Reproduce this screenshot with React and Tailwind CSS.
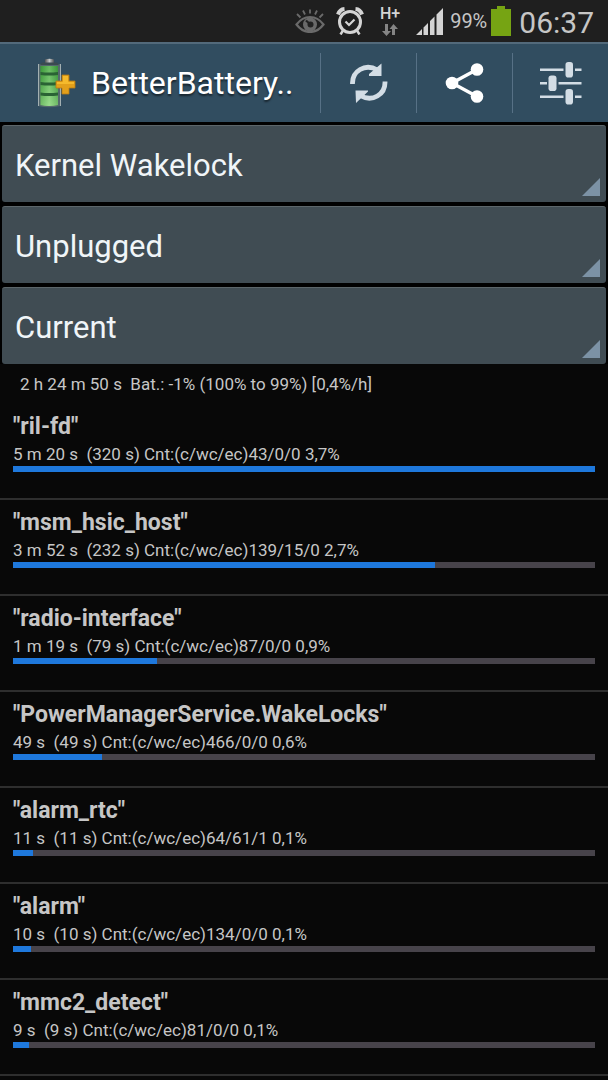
import React from "react";

const wakelocks = [
  { name: '"ril-fd"', seconds: 320, detail: "5 m 20 s  (320 s) Cnt:(c/wc/ec)43/0/0 3,7%" },
  { name: '"msm_hsic_host"', seconds: 232, detail: "3 m 52 s  (232 s) Cnt:(c/wc/ec)139/15/0 2,7%" },
  { name: '"radio-interface"', seconds: 79, detail: "1 m 19 s  (79 s) Cnt:(c/wc/ec)87/0/0 0,9%" },
  { name: '"PowerManagerService.WakeLocks"', seconds: 49, detail: "49 s  (49 s) Cnt:(c/wc/ec)466/0/0 0,6%" },
  { name: '"alarm_rtc"', seconds: 11, detail: "11 s  (11 s) Cnt:(c/wc/ec)64/61/1 0,1%" },
  { name: '"alarm"', seconds: 10, detail: "10 s  (10 s) Cnt:(c/wc/ec)134/0/0 0,1%" },
  { name: '"mmc2_detect"', seconds: 9, detail: "9 s  (9 s) Cnt:(c/wc/ec)81/0/0 0,1%" },
];
const longest = Math.max(...wakelocks.map((w) => w.seconds));

function EyeIcon() {
  return (
    <svg className="h-6 w-8" viewBox="0 0 32 24" fill="none" aria-hidden="true">
      <path d="M2.500 15.500C7 9.500 11.500 8 16 8S25 9.500 29.500 15.500C25 21.500 21 23 16 23S7 21.500 2.500 15.500Z" stroke="#6a6a6a" strokeWidth="2.200" />
      <circle cx="16" cy="15.500" r="7" fill="#6a6a6a" />
      <circle cx="16.500" cy="15.500" r="3" fill="#222" />
      <path d="M16.500 15.500L12 11.500" stroke="#222" strokeWidth="2.200" />
      <path d="M16 .5V4.500M9 1.500L11 5.500M23 1.500L21 5.500M3 5L6.500 8.500M29 5L25.500 8.500" stroke="#6a6a6a" strokeWidth="1.800" />
    </svg>
  );
}

function AlarmIcon() {
  return (
    <svg className="h-7 w-7" viewBox="0 0 28 28" fill="none" stroke="#d4d4d4" aria-hidden="true">
      <circle cx="14" cy="15" r="10.500" strokeWidth="3" />
      <path d="M9.500 14.500L13 18L18.500 12.500" strokeWidth="2.200" />
      <path d="M2 7.500C3 4.500 5.500 2.200 8.500 2M26 7.500C25 4.500 22.500 2.200 19.500 2" strokeWidth="4" />
      <path d="M7 23.500L4.500 27.500M21 23.500L23.500 27.500" strokeWidth="2.500" />
    </svg>
  );
}

function DataArrowsIcon() {
  return (
    <svg className="h-3 w-4" viewBox="0 0 16 12" fill="#858585" aria-hidden="true">
      <path d="M3 0H6V7H9L4.500 12L0 7H3ZM10 11H13V5H16L11.500 0L7.500 5H10Z" />
    </svg>
  );
}

function SignalIcon() {
  return (
    <svg className="h-7 w-7" viewBox="0 0 28 28" fill="#d4d4d4" aria-hidden="true">
      <path d="M0 28L6 22V28ZM7.500 20.500L12 16V28H7.500ZM14 14L18.500 9.500V28H14ZM20.500 7.500L27 1V28H20.500Z" />
    </svg>
  );
}

function StatusBatteryIcon() {
  return (
    <svg className="h-[30px] w-5" viewBox="0 0 20 30" fill="#76a413" aria-hidden="true">
      <path d="M6 0H14V3H20V30H0V3H6Z" />
    </svg>
  );
}

function AppLogo() {
  return (
    <svg className="h-[52px] w-10 shrink-0" viewBox="0 0 40 52" aria-hidden="true">
      <defs>
        <linearGradient id="cell" x1="0" x2="1">
          <stop offset="0" stopColor="#3f9e3a" />
          <stop offset=".5" stopColor="#8fdc80" />
          <stop offset="1" stopColor="#3f9a3c" />
        </linearGradient>
        <linearGradient id="shade" x1="0" x2="0" y1="0" y2="1">
          <stop offset="0" stopColor="#2f8a35" stopOpacity=".4" />
          <stop offset="1" stopColor="#a6dd98" stopOpacity=".5" />
        </linearGradient>
        <linearGradient id="cap" x1="0" x2="1">
          <stop offset="0" stopColor="#555" />
          <stop offset=".5" stopColor="#c5c9cb" />
          <stop offset="1" stopColor="#505354" />
        </linearGradient>
      </defs>
      <path d="M1 7H23V49Q12 51.500 1 49Z" fill="#55686d" />
      <path d="M8 2.500Q12.500 1 17 2.500V6H8Z" fill="url(#cap)" />
      <path d="M5 5.500H20L22 8H3Z" fill="#3b4a50" />
      <path d="M1.500 7V49M23.500 7V49" stroke="#a3b0b2" />
      <path d="M3.500 9H21V48Q12 50 3.500 48Z" fill="url(#cell)" />
      <path d="M3.500 9H21V48Q12 50 3.500 48Z" fill="url(#shade)" />
      <path d="M3.500 15Q12 16 21 15V18Q12 19 3.500 18ZM3.500 25Q12 26 21 25V28Q12 29 3.500 28ZM3.500 35.500Q12 36.500 21 35.500V38.500Q12 39.500 3.500 38.500Z" fill="#2a6334" />
      <path d="M25 18H32V24H38V31H32V37H25V31H19V24H25Z" fill="#e3a01b" stroke="#b97b12" strokeWidth=".8" />
      <path d="M26 19H31V25H37V27H20V25H26Z" fill="#f5ba2c" />
    </svg>
  );
}

function RefreshIcon() {
  return (
    <svg className="h-10 w-10" viewBox="0 0 40 40" aria-hidden="true">
      <g fill="none" stroke="#d3dde5" strokeWidth="4.800">
        <path d="M3.500 21C3 8 16 0 28.500 7" />
        <path d="M36 18.500C36.500 31.500 23.500 39.500 11 32.500" />
      </g>
      <path d="M20 11L32.500 .5V13H20ZM19 28.500L7 40L6.500 27.500H19Z" fill="#d3dde5" />
    </svg>
  );
}

function ShareIcon() {
  return (
    <svg className="h-10 w-10" viewBox="0 0 40 40" aria-hidden="true">
      <path d="M32 6.500L7 20L32 33.500" fill="none" stroke="#fff" strokeWidth="3.400" />
      <g fill="#fff">
        <circle cx="32" cy="6.500" r="6.300" />
        <circle cx="7" cy="20" r="6.300" />
        <circle cx="32" cy="33.500" r="6.300" />
      </g>
    </svg>
  );
}

function SlidersIcon() {
  return (
    <svg className="h-11 w-11" viewBox="0 0 44 44" fill="#d3dde5" aria-hidden="true">
      <path d="M1 7.500H24.500V10H1ZM36 7.500H42.500V10H36ZM1 21H8V23.500H1ZM19.500 21H42.500V23.500H19.500ZM1 34.500H24.500V37H1ZM36 34.500H42.500V37H36Z" />
      <rect x="26.500" y="1" width="7.500" height="15.500" rx="2.800" />
      <rect x="9.500" y="14.500" width="8" height="15.500" rx="2.800" />
      <rect x="26.500" y="28" width="7.500" height="15.500" rx="2.800" />
    </svg>
  );
}

function Action({ label, children }) {
  return (
    <div className="flex h-full w-24 shrink-0 items-center">
      <div className="h-[60px] w-px bg-[#577186]" />
      <button type="button" aria-label={label} className="flex h-full flex-1 items-center justify-center">
        {children}
      </button>
    </div>
  );
}

function Spinner({ label, value }) {
  return (
    <div className="relative">
      <select
        aria-label={label}
        defaultValue={value}
        className="block h-[77px] w-full appearance-none rounded-[3px] border-t border-[#5c666a] bg-[#404c53] px-[13px] pt-1 text-[31px] text-[#f0f5f8]"
      >
        <option>{value}</option>
      </select>
      <svg className="pointer-events-none absolute right-1.5 bottom-1.5 h-[18px] w-[18px]" viewBox="0 0 18 18" aria-hidden="true">
        <path d="M18 0V18H0Z" fill="#7c92a5" />
      </svg>
    </div>
  );
}

export default function App() {
  return (
    <div className="min-h-screen bg-[#080808] font-[Roboto,sans-serif] text-[#c6c6c6]">
      <div className="flex h-[42px] items-center justify-end bg-[#1f1f1f] pr-3.5">
        <EyeIcon />
        <div className="ml-2.5">
          <AlarmIcon />
        </div>
        <div className="ml-4 flex flex-col items-center gap-0.5">
          <span className="text-base leading-4 font-medium text-[#d4d4d4]">H+</span>
          <DataArrowsIcon />
        </div>
        <div className="ml-4">
          <SignalIcon />
        </div>
        <span className="ml-1.5 text-xl">99%</span>
        <div className="ml-1">
          <StatusBatteryIcon />
        </div>
        <span className="ml-2 pt-1 text-[30px] leading-10">06:37</span>
      </div>

      <header className="flex h-20 items-center border-t-2 border-[#536a7b] bg-[#314d60] pl-[37px]">
        <AppLogo />
        <h1 className="min-w-0 flex-1 pl-3.5 text-[32px] whitespace-nowrap text-white [text-shadow:0_2px_2px_#0008]">BetterBattery..</h1>
        <Action label="Refresh">
          <RefreshIcon />
        </Action>
        <Action label="Share">
          <ShareIcon />
        </Action>
        <Action label="Settings">
          <SlidersIcon />
        </Action>
      </header>

      <main>
        <div className="flex flex-col gap-1 bg-black px-0.5 pt-[3px]">
          <Spinner label="Statistic" value="Kernel Wakelock" />
          <Spinner label="From" value="Unplugged" />
          <Spinner label="To" value="Current" />
        </div>
        <p className="px-5 pt-2 text-[17px] leading-6 whitespace-pre">2 h 24 m 50 s  Bat.: -1% (100% to 99%) [0,4%/h]</p>
        <ul className="pt-2">
          {wakelocks.map((w) => (
            <li key={w.name} className="h-24 border-b-2 border-[#2e2e2e] px-[13px] pt-2">
              <h2 className="text-[23px] leading-[30px] font-bold">{w.name}</h2>
              <p className="text-[17px] leading-6 whitespace-pre">{w.detail}</p>
              <div className="h-1.5 bg-[#47434a]">
                <div className="h-full bg-[#1e78dc]" style={{ width: `${(w.seconds / longest) * 100}%` }} />
              </div>
            </li>
          ))}
        </ul>
      </main>
    </div>
  );
}
